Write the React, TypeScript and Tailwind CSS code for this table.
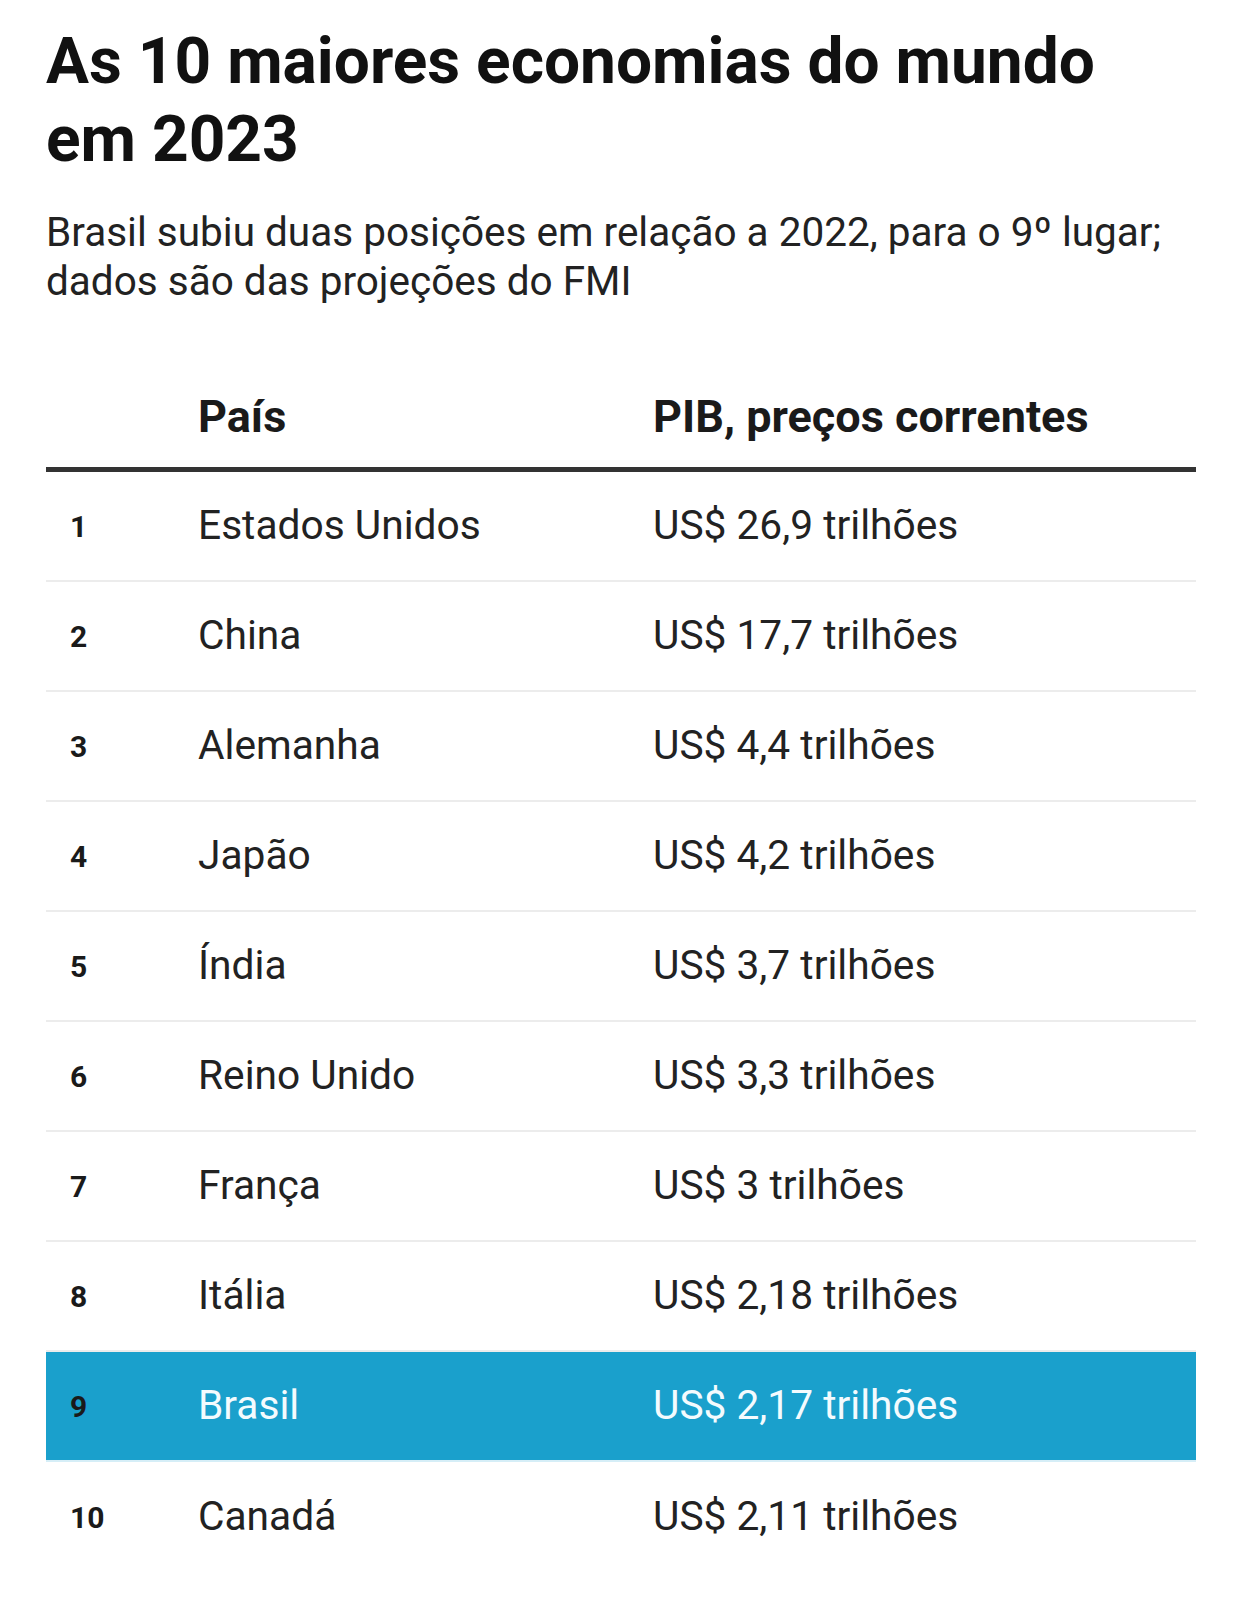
const ROWS = [
  { rank: 1, country: "Estados Unidos", gdp: "US$ 26,9 trilhões" },
  { rank: 2, country: "China", gdp: "US$ 17,7 trilhões" },
  { rank: 3, country: "Alemanha", gdp: "US$ 4,4 trilhões" },
  { rank: 4, country: "Japão", gdp: "US$ 4,2 trilhões" },
  { rank: 5, country: "Índia", gdp: "US$ 3,7 trilhões" },
  { rank: 6, country: "Reino Unido", gdp: "US$ 3,3 trilhões" },
  { rank: 7, country: "França", gdp: "US$ 3 trilhões" },
  { rank: 8, country: "Itália", gdp: "US$ 2,18 trilhões" },
  { rank: 9, country: "Brasil", gdp: "US$ 2,17 trilhões", highlight: true },
  { rank: 10, country: "Canadá", gdp: "US$ 2,11 trilhões" },
];

export default function App() {
  return (
    <div className="min-h-[1600px] bg-white px-[46px] pt-[23px] font-['Roboto',sans-serif]">
      {/* Heading */}
      <h1 className="max-w-[1110px] text-[64px] leading-[78px] font-bold text-[#111]">
        As 10 maiores economias do mundo em 2023
      </h1>
      <p className="mt-[29px] max-w-[1170px] text-[40.5px] leading-[49px] text-[#222]">
        Brasil subiu duas posições em relação a 2022, para o 9º lugar; dados são das projeções do FMI
      </p>

      {/* Table */}
      <div className="mt-[85px] w-[1150px]">
        <div className="grid grid-cols-[152px_455px_1fr] pb-[24px] border-b-[5px] border-[#333] text-[45px] leading-[52px] font-bold text-[#1a1a1a]">
          <div />
          <div>País</div>
          <div>PIB, preços correntes</div>
        </div>

        {ROWS.map((row) => (
          <div
            key={row.rank}
            className={
              row.highlight
                ? "grid grid-cols-[152px_455px_1fr] items-center h-[110px] bg-[#1aa0cc] border-b-2 border-[#d6eef7]"
                : row.rank === 10
                  ? "grid grid-cols-[152px_455px_1fr] items-center h-[110px]"
                  : "grid grid-cols-[152px_455px_1fr] items-center h-[110px] border-b-2 border-[#ececec]"
            }
          >
            <div className="pl-[24px] text-[30px] font-bold text-[#1a1a1a]">{row.rank}</div>
            <div className={row.highlight ? "text-[40.7px] text-[#f4fbfe]" : "text-[40.7px] text-[#222]"}>
              {row.country}
            </div>
            <div className={row.highlight ? "text-[40.7px] text-[#f4fbfe]" : "text-[40.7px] text-[#222]"}>
              {row.gdp}
            </div>
          </div>
        ))}
      </div>
    </div>
  );
}
